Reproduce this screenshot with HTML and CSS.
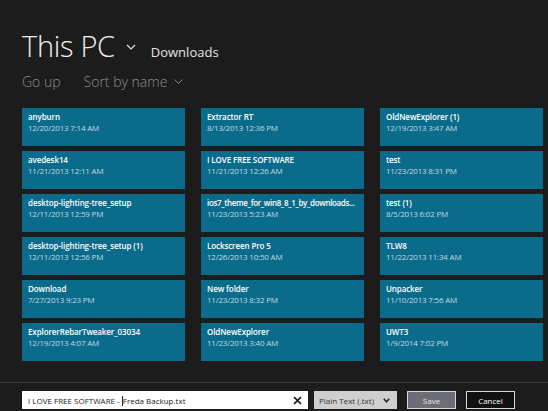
FILE: index.html
```
<!DOCTYPE html>
<html lang="en">
<head>
    <meta charset="utf-8">
    <title>This PC - Downloads</title>
    <link rel="stylesheet" href="styles.css">
</head>
<body>
    <div class="header">
        <div class="title-row">
            <span class="title">This PC</span>
            <svg class="chev chev-big" width="10" height="6" viewBox="0 0 10 6"><polyline points="1,1 5,5 9,1" fill="none" stroke="#e0e0e0" stroke-width="1.2"/></svg>
            <span class="folder">Downloads</span>
        </div>
        <div class="cmd-row">
            <span class="cmd">Go up</span>
            <span class="cmd sort">Sort by name</span>
            <svg class="chev" width="9" height="5" viewBox="0 0 9 5"><polyline points="0.5,0.5 4.5,4.5 8.5,0.5" fill="none" stroke="#8c8c8c" stroke-width="1"/></svg>
        </div>
    </div>

    <div class="tiles">
        <div class="tile"><div class="name">anyburn</div><div class="date">12/20/2013 7:14 AM</div></div>
        <div class="tile"><div class="name">Extractor RT</div><div class="date">8/13/2013 12:36 PM</div></div>
        <div class="tile"><div class="name">OldNewExplorer (1)</div><div class="date">12/19/2013 3:47 AM</div></div>

        <div class="tile"><div class="name">avedesk14</div><div class="date">11/21/2013 12:11 AM</div></div>
        <div class="tile"><div class="name">I LOVE FREE SOFTWARE</div><div class="date">11/21/2013 12:26 AM</div></div>
        <div class="tile"><div class="name">test</div><div class="date">11/23/2013 8:31 PM</div></div>

        <div class="tile"><div class="name">desktop-lighting-tree_setup</div><div class="date">12/11/2013 12:59 PM</div></div>
        <div class="tile"><div class="name name-long">ios7_theme_for_win8_8_1_by_downloads...</div><div class="date">11/23/2013 5:23 AM</div></div>
        <div class="tile"><div class="name">test (1)</div><div class="date">8/5/2013 6:02 PM</div></div>

        <div class="tile"><div class="name">desktop-lighting-tree_setup (1)</div><div class="date">12/11/2013 12:56 PM</div></div>
        <div class="tile"><div class="name">Lockscreen Pro 5</div><div class="date">12/26/2013 10:50 AM</div></div>
        <div class="tile"><div class="name">TLW8</div><div class="date">11/22/2013 11:34 AM</div></div>

        <div class="tile"><div class="name">Download</div><div class="date">7/27/2013 9:23 PM</div></div>
        <div class="tile"><div class="name">New folder</div><div class="date">11/23/2013 8:32 PM</div></div>
        <div class="tile"><div class="name">Unpacker</div><div class="date">11/10/2013 7:56 AM</div></div>

        <div class="tile"><div class="name">ExplorerRebarTweaker_03034</div><div class="date">12/19/2013 4:07 AM</div></div>
        <div class="tile"><div class="name">OldNewExplorer</div><div class="date">11/23/2013 3:40 AM</div></div>
        <div class="tile"><div class="name">UWT3</div><div class="date">1/9/2014 7:02 PM</div></div>
    </div>

    <div class="save-bar">
        <div class="filename">
            <span class="fn-text">I LOVE FREE SOFTWARE - <span class="caret"></span>Freda Backup.txt</span>
            <svg class="clear" width="9" height="9" viewBox="0 0 9 9"><path d="M1 1 L8 8 M8 1 L1 8" stroke="#111" stroke-width="1.7"/></svg>
        </div>
        <div class="filetype">
            <span>Plain Text (.txt)</span>
            <svg width="7" height="5" viewBox="0 0 7 5"><polyline points="0.8,0.8 3.5,3.8 6.2,0.8" fill="none" stroke="#222" stroke-width="1.5"/></svg>
        </div>
        <div class="btn btn-save">Save</div>
        <div class="btn btn-cancel">Cancel</div>
    </div>
</body>
</html>
```
FILE: styles.css
```
body {
    margin: 0;
    width: 548px;
    height: 411px;
    background: #1c1c1c;
    font-family: "Open Sans", "Noto Sans", sans-serif;
    color: #fff;
    overflow: hidden;
}
.header {
    padding: 26px 0 0 22px;
    height: 82px;
    box-sizing: border-box;
}
.title-row {
    display: flex;
    align-items: baseline;
    height: 36px;
}
.title {
    font-size: 29px;
    font-weight: 300;
    color: #f0f0f0;
    letter-spacing: -0.3px;
}
.chev {
    margin-left: 7px;
    align-self: center;
}
.chev-big {
    margin: 6px 15px 0 11px;
}
.folder {
    font-size: 13px;
    color: #e4e4e4;
}
.cmd-row {
    display: flex;
    align-items: center;
    margin-top: 10px;
}
.cmd {
    font-size: 14px;
    font-weight: 300;
    color: #8c8c8c;
}
.sort {
    margin-left: 23px;
}
.tiles {
    display: grid;
    grid-template-columns: repeat(3, 163px);
    grid-auto-rows: 38px;
    column-gap: 16px;
    row-gap: 5px;
    margin: 26px 0 0 22px;
}
.tile {
    background: #0b6b8b;
    padding: 3px 6px 0;
    font-size: 8px;
    line-height: 11px;
    overflow: hidden;
}
.name {
    font-weight: 600;
    color: #fff;
    white-space: nowrap;
    overflow: hidden;
    letter-spacing: -0.1px;
}
.name-long {
    letter-spacing: -0.35px;
}
.date {
    color: #c2dae3;
    letter-spacing: -0.2px;
}
.save-bar {
    position: absolute;
    left: 0;
    top: 382px;
    width: 548px;
    height: 29px;
    border-top: 1px solid #3a3a3a;
    display: flex;
    align-items: flex-start;
    padding: 8px 0 0 22px;
    box-sizing: border-box;
    font-size: 8px;
}
.filename {
    width: 286px;
    height: 18px;
    background: #fff;
    color: #222;
    display: flex;
    align-items: center;
    justify-content: space-between;
    padding: 0 6px 0 6px;
    box-sizing: border-box;
}
.caret {
    display: inline-block;
    width: 1px;
    height: 10px;
    background: #222;
    vertical-align: -2px;
}
.filetype {
    width: 83px;
    height: 18px;
    margin-left: 6px;
    background: #cfcfcf;
    color: #333;
    display: flex;
    align-items: center;
    justify-content: space-between;
    padding: 0 7px 0 5px;
    box-sizing: border-box;
}
.btn {
    width: 49px;
    height: 18px;
    box-sizing: border-box;
    border: 1px solid #d8d8d8;
    display: flex;
    align-items: center;
    justify-content: center;
}
.btn-save {
    margin-left: 10px;
    background: #6d6d78;
    color: #e6e6e6;
}
.btn-cancel {
    margin-left: 10px;
    background: #111;
    color: #fff;
}
```
